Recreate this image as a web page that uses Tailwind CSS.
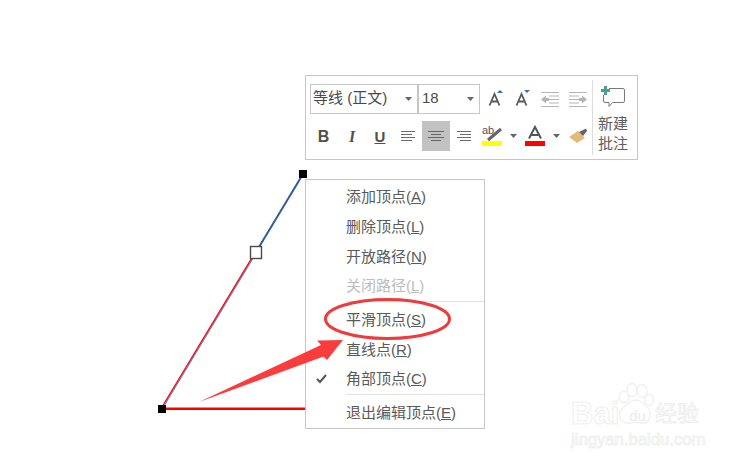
<!DOCTYPE html>
<html lang="en">
<head>
    <meta charset="UTF-8">
    <title>Edit Points</title>
    <script src="https://cdn.jsdelivr.net/npm/@tailwindcss/browser@4"></script>
</head>
<body class="bg-white">
<div class="relative w-[744px] h-[464px] overflow-hidden bg-white font-['Liberation_Sans','Noto_Sans_CJK_SC',sans-serif] text-[#505050]">

    <!-- Shape on the slide -->
    <svg class="absolute inset-0" width="744" height="464" viewBox="0 0 744 464">
        <line x1="303" y1="174" x2="256" y2="252" stroke="#2f5c9e" stroke-width="2"/>
        <line x1="256.700" y1="252" x2="162.700" y2="408" stroke="#5b84bd" stroke-width="1.200"/>
        <line x1="255.400" y1="252" x2="161.400" y2="408" stroke="#ff0010" stroke-width="1.300"/>
        <line x1="162" y1="409.500" x2="306" y2="409.500" stroke="#2a4a9a" stroke-width="1"/>
        <line x1="162" y1="408.500" x2="306" y2="408.500" stroke="#ff0000" stroke-width="2"/>
        <rect x="299" y="170" width="8" height="8" fill="#000"/>
        <rect x="158" y="405" width="8" height="8" fill="#000"/>
        <rect x="250.500" y="246.500" width="11" height="12" fill="#fff" stroke="#4a4a4a" stroke-width="1.400"/>
    </svg>

    <!-- Mini toolbar -->
    <div class="absolute left-[305px] top-[75px] w-[333px] h-[85px] bg-white border border-[#c6c6c6] flex pl-[4px] pt-[8px]">
        <div class="w-[282px] flex flex-col">
            <div class="flex items-start h-[31px]">
                <div class="w-[108px] h-[30px] border border-[#c6c6c6] flex items-center justify-between pl-[2px] pr-[5px] pb-[2px] text-[15px] text-[#4a4a4a]">
                    <span>等线 (正文)</span>
                    <svg class="mt-[2px]" width="7" height="4" viewBox="0 0 7 4"><path d="M0 0h7L3.500 4z" fill="#666"/></svg>
                </div>
                <div class="w-[62px] h-[30px] border border-[#c6c6c6] flex items-center justify-between pl-[3px] pr-[5px] pb-[2px] text-[15px] text-[#4a4a4a]">
                    <span>18</span>
                    <svg class="mt-[2px]" width="7" height="4" viewBox="0 0 7 4"><path d="M0 0h7L3.500 4z" fill="#666"/></svg>
                </div>
                <div class="flex items-start ml-[8px] mt-[6px]">
                    <svg width="18" height="18" viewBox="0 0 18 18">
                        <path d="M9 3l3-3 3 3z" fill="#2e75b6"/>
                        <path d="M1.500 15.500L6.500 4l5 11.500M3.500 11.500h6" fill="none" stroke="#5a5a5a" stroke-width="1.800"/>
                    </svg>
                    <svg class="ml-[9px]" width="18" height="18" viewBox="0 0 18 18">
                        <path d="M9 0h6l-3 3z" fill="#2e75b6"/>
                        <path d="M1.500 15.500L6.500 4l5 11.500M3.500 11.500h6" fill="none" stroke="#5a5a5a" stroke-width="1.800"/>
                    </svg>
                    <svg class="ml-[8px]" width="18" height="18" viewBox="0 0 18 18">
                        <path d="M0 2.500h18M8 6h10M8 9.500h10M8 13h10M0 16.500h18" stroke="#b5b5b5" fill="none"/>
                        <path d="M0 9.500l5-4v2.500h3v3H5v2.500z" fill="#b5b5b5"/>
                    </svg>
                    <svg class="ml-[10px]" width="18" height="18" viewBox="0 0 18 18">
                        <path d="M0 2.500h18M0 6h10M0 9.500h10M0 13h10M0 16.500h18" stroke="#b5b5b5" fill="none"/>
                        <path d="M18 9.500l-5-4v2.500h-3v3h3v2.500z" fill="#b5b5b5"/>
                    </svg>
                </div>
            </div>
            <div class="flex items-center h-[30px] mt-[6px]">
                <span class="w-[27px] pt-[2px] text-[16px] font-bold text-center">B</span>
                <span class="w-[30px] pt-[2px] text-[16px] font-bold italic text-center font-['Liberation_Serif',serif]">I</span>
                <span class="w-[26px] pt-[2px] text-[15px] font-bold underline text-center">U</span>
                <div class="w-[29px] flex justify-center">
                    <svg width="14" height="11" viewBox="0 0 14 11"><path d="M0 .5h14M0 3.500h11M0 6.500h14M0 9.500h11" stroke="#6a6a6a" fill="none"/></svg>
                </div>
                <div class="w-[28px] h-[30px] bg-[#c2c2c2] flex items-center justify-center">
                    <svg width="16" height="11" viewBox="0 0 16 11"><path d="M0 .5h16M3 3.500h10M0 6.500h16M3 9.500h10" stroke="#666" fill="none"/></svg>
                </div>
                <div class="w-[28px] flex justify-center">
                    <svg width="14" height="11" viewBox="0 0 14 11"><path d="M0 .5h14M3 3.500h11M0 6.500h14M3 9.500h11" stroke="#6a6a6a" fill="none"/></svg>
                </div>
                <svg class="ml-[4px]" width="20" height="22" viewBox="0 0 20 22">
                    <text x="0" y="9" font-size="11" fill="#555" font-family="Liberation Sans">ab</text>
                    <path d="M6 15L19 4" stroke="#666" stroke-width="3" fill="none"/>
                    <rect x="0" y="16" width="20" height="5" fill="#ffff00"/>
                </svg>
                <svg class="ml-[8px]" width="7" height="4" viewBox="0 0 7 4"><path d="M0 0h7L3.500 4z" fill="#666"/></svg>
                <svg class="ml-[8px]" width="20" height="22" viewBox="0 0 20 22">
                    <path d="M4 13.500L10 2l6 11.500M6 10h8" fill="none" stroke="#555" stroke-width="2"/>
                    <rect x="0" y="16" width="20" height="5" fill="#ff0000"/>
                </svg>
                <svg class="ml-[8px]" width="7" height="4" viewBox="0 0 7 4"><path d="M0 0h7L3.500 4z" fill="#666"/></svg>
                <svg class="ml-[9px]" width="18" height="16" viewBox="0 0 18 16">
                    <path d="M0 9L9 3l7 7-8 5z" fill="#e5b97a"/>
                    <path d="M10 4L17 .5 18 3l-4 5z" fill="#666"/>
                </svg>
            </div>
        </div>
        <div class="w-px h-[75px] mt-[-4px] bg-[#dcdcdc]"></div>
        <div class="flex flex-col items-center w-[40px] mt-[2px]">
            <svg width="24" height="22" viewBox="0 0 24 22">
                <path d="M8 2.500h14a1.500 1.500 0 0 1 1.500 1.500v11a1.500 1.500 0 0 1-1.500 1.500H11.500l-3.500 4v-4H4a1.500 1.500 0 0 1-1.500-1.500V9" fill="none" stroke="#7a7a7a"/>
                <path d="M3 0h3v3h3v3H6v3H3V6H0V3h3z" fill="#4f9d8f"/>
            </svg>
            <div class="mt-[6px] text-[15px] leading-[20px] text-center text-[#5e5e5e]">新建<br>批注</div>
        </div>
    </div>

    <!-- Context menu -->
    <div class="absolute left-[305px] top-[179px] w-[180px] h-[250px] bg-white border border-[#c6c6c6] text-[15px] text-[#5a5a5a]">
        <div class="h-[30px] mt-[2px] pl-[40px] flex items-center"><span>添加顶点(<u>A</u>)</span></div>
        <div class="h-[30px] pl-[40px] flex items-center"><span>删除顶点(<u>L</u>)</span></div>
        <div class="h-[30px] pl-[40px] flex items-center"><span>开放路径(<u>N</u>)</span></div>
        <div class="h-[29px] pl-[40px] flex items-center text-[#bdbdbd]"><span>关闭路径(<u>L</u>)</span></div>
        <div class="h-px ml-[40px] bg-[#e2e2e2]"></div>
        <div class="h-[30px] mt-[3px] pl-[40px] flex items-center"><span>平滑顶点(<u>S</u>)</span></div>
        <div class="h-[30px] pl-[40px] flex items-center"><span>直线点(<u>R</u>)</span></div>
        <div class="relative h-[29px] pl-[40px] flex items-center">
            <svg class="absolute left-[10px] top-[9px]" width="11" height="10" viewBox="0 0 11 10"><path d="M1 5l3 3 6-7" fill="none" stroke="#555" stroke-width="2"/></svg>
            <span>角部顶点(<u>C</u>)</span>
        </div>
        <div class="h-px ml-[40px] bg-[#e2e2e2]"></div>
        <div class="h-[30px] mt-[3px] pl-[40px] flex items-center"><span>退出编辑顶点(<u>E</u>)</span></div>
    </div>

    <!-- Red annotations -->
    <svg class="absolute inset-0" width="744" height="464" viewBox="0 0 744 464">
        <ellipse cx="387.500" cy="319" rx="62" ry="19.500" fill="none" stroke="#ee3b3b" stroke-width="3"/>
        <path d="M199 402L321 345L317 340.500L343 340L327 360L323.500 356.500z" fill="#fb3c3c"/>
    </svg>

    <!-- Watermark -->
    <svg class="absolute left-[615px] top-[382px]" width="42" height="44" viewBox="0 0 42 44" fill="#fff" stroke="#f1f1f1" stroke-width="1.500">
        <ellipse cx="9" cy="15" rx="5" ry="6"/>
        <ellipse cx="17" cy="8" rx="5" ry="6.500"/>
        <ellipse cx="27" cy="9" rx="5" ry="6.500"/>
        <ellipse cx="34" cy="18" rx="4.500" ry="5.500"/>
        <path d="M21 18c5 0 8 4 12 8 4 5 2 16-6 15-3-.500-9-1-12 0-7 1-12-4-10-11 1-4 4-5 8-8 3-2 4-4 8-4z"/>
    </svg>
    <div class="absolute left-[571px] top-[399px] flex items-center text-white">
        <span class="text-[31px] leading-[30px] font-bold [-webkit-text-stroke:1px_#efefef]">Bai</span>
        <span class="ml-[10px] mt-[4px] text-[15px] leading-[20px] text-[#ececec]">du</span>
        <span class="ml-[9px] text-[22px] leading-[30px] [-webkit-text-stroke:1px_#efefef]">经验</span>
    </div>
    <div class="absolute left-[571px] top-[431px] text-[16.700px] leading-[18px] text-white [-webkit-text-stroke:1px_#f0f0f0]">jingyan.baidu.com</div>
</div>
</body>
</html>
